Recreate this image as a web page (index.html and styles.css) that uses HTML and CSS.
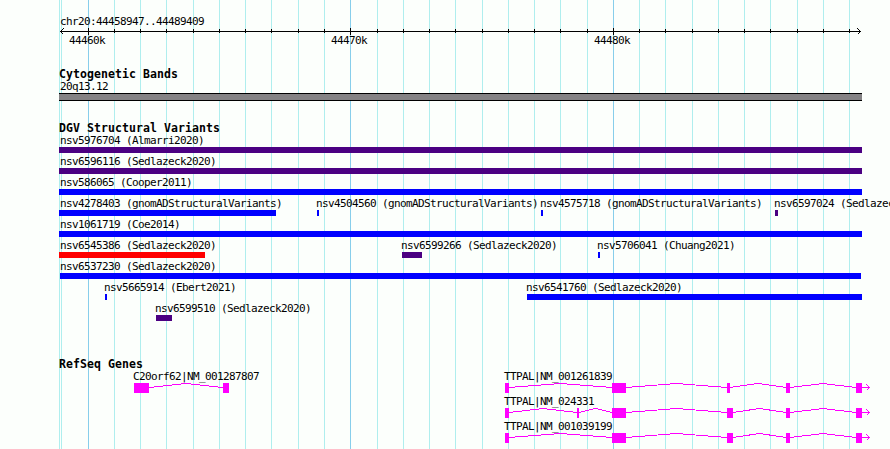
FILE: index.html
```
<!DOCTYPE html>
<html lang="en">
<head>
    <meta charset="UTF-8">
    <title>chr20:44458947..44489409</title>
    <link rel="stylesheet" href="styles.css">
</head>
<body>
    <div class="panel">
        <!-- Vertical grid lines behind the tracks -->
        <svg class="gridlines" width="890" height="449">
            <path class="minor" d="M59.5 0V449M61.5 0V449M114.5 0V449M140.5 0V449M166.5 0V449M193.5 0V449M219.5 0V449M245.5 0V449M271.5 0V449M298.5 0V449M324.5 0V449M377.5 0V449M403.5 0V449M429.5 0V449M455.5 0V449M482.5 0V449M508.5 0V449M534.5 0V449M560.5 0V449M587.5 0V449M639.5 0V449M665.5 0V449M692.5 0V449M718.5 0V449M744.5 0V449M770.5 0V449M797.5 0V449M823.5 0V449M849.5 0V449"/>
            <path class="major" d="M88.5 0V449M350.5 0V449M613.5 0V449"/>
        </svg>

        <!-- Ruler -->
        <div class="ruler">
            <div class="row">
                <div class="feature" style="margin-left: 60px"><span class="label flush">chr20:44458947..44489409</span></div>
            </div>
            <svg class="axis" width="890" height="7">
                <path d="M60 3.5H861M88.5 0V7M350.5 0V7M613.5 0V7"/>
                <path d="M114.5 1V5M140.5 1V5M166.5 1V5M193.5 1V5M219.5 1V5M245.5 1V5M271.5 1V5M298.5 1V5M324.5 1V5M377.5 1V5M403.5 1V5M429.5 1V5M455.5 1V5M482.5 1V5M508.5 1V5M534.5 1V5M560.5 1V5M587.5 1V5M639.5 1V5M665.5 1V5M692.5 1V5M718.5 1V5M744.5 1V5M770.5 1V5M797.5 1V5M823.5 1V5M849.5 1V5"/>
                <path d="M63.5 .5L60.5 3.5L63.5 6.5M857.5 .5L860.5 3.5L857.5 6.5"/>
            </svg>
            <div class="row ticks">
                <span class="tick" style="margin-left: 69px">44460k</span>
                <span class="tick" style="margin-left: 331px">44470k</span>
                <span class="tick" style="margin-left: 594px">44480k</span>
            </div>
        </div>

        <!-- Cytogenetic bands -->
        <div class="track cytobands">
            <div class="heading">Cytogenetic Bands</div>
            <div class="row">
                <div class="feature" style="margin-left: 59px"><span class="label inset">20q13.12</span><div class="band" style="width: 803px"></div></div>
            </div>
        </div>

        <!-- Structural variants -->
        <div class="track variants">
            <div class="heading">DGV Structural Variants</div>
            <div class="row">
                <div class="feature" style="margin-left: 59px"><span class="label inset">nsv5976704 (Almarri2020)</span><div class="bar complex" style="width: 803px"></div></div>
            </div>
            <div class="row">
                <div class="feature" style="margin-left: 59px"><span class="label inset">nsv6596116 (Sedlazeck2020)</span><div class="bar complex" style="width: 803px"></div></div>
            </div>
            <div class="row">
                <div class="feature" style="margin-left: 59px"><span class="label inset">nsv586065 (Cooper2011)</span><div class="bar gain" style="width: 803px"></div></div>
            </div>
            <div class="row">
                <div class="feature" style="margin-left: 59px"><span class="label inset">nsv4278403 (gnomADStructuralVariants)</span><div class="bar gain" style="width: 217px"></div></div>
                <div class="feature" style="margin-left: 317px"><span class="label">nsv4504560 (gnomADStructuralVariants)</span><div class="bar gain" style="width: 2px"></div></div>
                <div class="feature" style="margin-left: 541px"><span class="label">nsv4575718 (gnomADStructuralVariants)</span><div class="bar gain" style="width: 2px"></div></div>
                <div class="feature" style="margin-left: 775px"><span class="label">nsv6597024 (Sedlazeck2020)</span><div class="bar complex" style="width: 3px"></div></div>
            </div>
            <div class="row">
                <div class="feature" style="margin-left: 59px"><span class="label inset">nsv1061719 (Coe2014)</span><div class="bar gain" style="width: 803px"></div></div>
            </div>
            <div class="row">
                <div class="feature" style="margin-left: 59px"><span class="label inset">nsv6545386 (Sedlazeck2020)</span><div class="bar loss" style="width: 146px"></div></div>
                <div class="feature" style="margin-left: 402px"><span class="label">nsv6599266 (Sedlazeck2020)</span><div class="bar complex" style="width: 20px"></div></div>
                <div class="feature" style="margin-left: 598px"><span class="label">nsv5706041 (Chuang2021)</span><div class="bar gain" style="width: 2px"></div></div>
            </div>
            <div class="row">
                <div class="feature" style="margin-left: 60px"><span class="label flush">nsv6537230 (Sedlazeck2020)</span><div class="bar gain" style="width: 801px"></div></div>
            </div>
            <div class="row">
                <div class="feature" style="margin-left: 105px"><span class="label">nsv5665914 (Ebert2021)</span><div class="bar gain" style="width: 2px"></div></div>
                <div class="feature" style="margin-left: 527px"><span class="label">nsv6541760 (Sedlazeck2020)</span><div class="bar gain" style="width: 335px"></div></div>
            </div>
            <div class="row">
                <div class="feature" style="margin-left: 156px"><span class="label">nsv6599510 (Sedlazeck2020)</span><div class="bar complex" style="width: 16px"></div></div>
            </div>
        </div>

        <!-- Genes: filled boxes are exons, peaked lines are introns -->
        <div class="track genes">
            <div class="heading">RefSeq Genes</div>
            <div class="row">
                <div class="feature" style="margin-left: 134px">
                    <span class="label">C20orf62|NM_001287807</span>
                    <svg class="gene" width="95" height="10">
                        <path class="exon" d="M0 0h15v10H0zM89 0h6v10h-6z"/>
                        <path class="intron" d="M15 4.5L52 .5L89 4.5"/>
                    </svg>
                </div>
                <div class="feature" style="margin-left: 505px">
                    <span class="label">TTPAL|NM_001261839</span>
                    <svg class="gene" width="366" height="10">
                        <path class="exon" d="M0 0h4v10H0zM107 0h14v10h-14zM222 0h3v10h-3zM281 0h4v10h-4zM351 0h6v10h-6z"/>
                        <path class="intron" d="M4 4.5L55.5 .5L107 4.5M121 4.5L171.5 .5L222 4.5M225 4.5L253 .5L281 4.5M285 4.5L318 .5L351 4.5M357 4.5H365M361.5 1.5L364.5 4.5L361.5 7.5"/>
                    </svg>
                </div>
            </div>
            <div class="row">
                <div class="feature" style="margin-left: 505px">
                    <span class="label">TTPAL|NM_024331</span>
                    <svg class="gene" width="366" height="10">
                        <path class="exon" d="M0 0h4v10H0zM72 0h2v10h-2zM107 0h14v10h-14zM222 0h6v10h-6zM281 0h4v10h-4zM351 0h6v10h-6z"/>
                        <path class="intron" d="M4 4.5L38 .5L72 4.5M74 4.5L90.5 .5L107 4.5M121 4.5L171.5 .5L222 4.5M228 4.5L254.5 .5L281 4.5M285 4.5L318 .5L351 4.5M357 4.5H365M361.5 1.5L364.5 4.5L361.5 7.5"/>
                    </svg>
                </div>
            </div>
            <div class="row">
                <div class="feature" style="margin-left: 505px">
                    <span class="label">TTPAL|NM_001039199</span>
                    <svg class="gene" width="366" height="10">
                        <path class="exon" d="M0 0h4v10H0zM107 0h14v10h-14zM222 0h6v10h-6zM281 0h4v10h-4zM351 0h6v10h-6z"/>
                        <path class="intron" d="M4 4.5L55.5 .5L107 4.5M121 4.5L171.5 .5L222 4.5M228 4.5L254.5 .5L281 4.5M285 4.5L318 .5L351 4.5M357 4.5H365M361.5 1.5L364.5 4.5L361.5 7.5"/>
                    </svg>
                </div>
            </div>
        </div>
    </div>
</body>
</html>
```
FILE: styles.css
```
body {
    margin: 0;
    background-color: #fcfffc;
    color: #000;
    font-family: 'DejaVu Sans Mono', monospace;
    font-size: 11px;
}

.panel {
    position: relative;
    width: 890px;
    height: 449px;
    overflow: hidden;
}

svg {
    display: block;
    fill: none;
    shape-rendering: crispEdges;
}

/* Lies under every track */
.gridlines {
    position: absolute;
    top: 0;
    left: 0;
    z-index: -1;
}

.minor {
    stroke: #afeeee;
}

.major {
    stroke: #87ceeb;
}

.ruler {
    padding-top: 13px;
    height: 55px;
}

.axis {
    stroke: #000;
}

/* All features of a row share one grid cell */
.row {
    display: grid;
    justify-items: start;
}

.feature,
.tick {
    grid-area: 1 / 1;
}

.label,
.tick {
    letter-spacing: -0.62px;
    white-space: nowrap;
}

.label {
    display: block;
    width: 0;
    height: 15px;
    margin-left: -1px;
    line-height: 17px;
}

.flush {
    margin-left: 0;
}

.inset {
    margin-left: 1px;
}

.tick {
    line-height: 11px;
}

.heading {
    height: 10px;
    padding-left: 59px;
    font-size: 11.5px;
    font-weight: bold;
    line-height: 13px;
    letter-spacing: 0.08px;
}

.cytobands {
    height: 54px;
}

.variants {
    height: 236px;
}

.band {
    box-sizing: border-box;
    height: 8px;
    border-top: 1px solid #000;
    border-bottom: 1px solid #000;
    background-color: #848284;
}

.bar {
    height: 6px;
}

.gain {
    background-color: #0000ff;
}

.loss {
    background-color: #ff0000;
}

.complex {
    background-color: #4b0082;
}

.exon {
    fill: #ff00ff;
}

.intron {
    stroke: #ff00ff;
}
```
